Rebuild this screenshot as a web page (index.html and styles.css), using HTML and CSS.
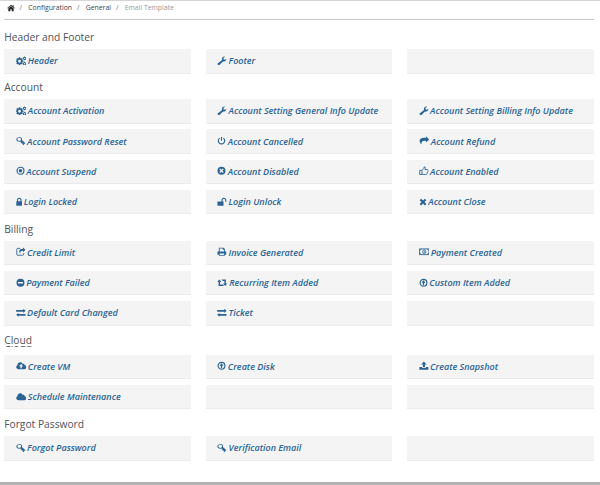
FILE: index.html
```
<!DOCTYPE html>
<html lang="en">
<head>
<meta charset="utf-8">
<title>Email Template</title>
<link rel="stylesheet" href="styles.css">
</head>
<body>
<svg class="sprite" aria-hidden="true">
  <symbol id="home" viewBox="0 0 14 14"><path d="M7 1.2 .4 6.9l.8.9L7 3l5.800 4.800.8-.9L11.500 5V2H9.700v1.500zM2.300 8v4.800h3.500V9h2.400v3.800h3.500V8L7 4.100z"/></symbol>
  <symbol id="cogs" viewBox="0 0 15 14"><path fill-rule="evenodd" d="M4 2h2l.3 1.400.9.4 1.200-.8L9.800 4.400 9 5.600l.4.900 1.300.3v1.900l-1.300.3-.4.900.8 1.200-1.400 1.400-1.200-.8-.9.4L6 13.300H4l-.3-1.200-.9-.4-1.200.8-1.400-1.400.8-1.200-.4-.9L0 8.700V6.800l.6-.3.400-.9-.8-1.200L1.600 3l1.200.8.9-.4zM5 5.600a2.100 2.100 0 1 0 0 4.200 2.100 2.100 0 0 0 0-4.200z"/><path fill-rule="evenodd" d="M12 .6h1l.3.8 1.200.3.4 1-.5.700.5.900-.4 1-1.200.3-.3.700h-1l-.5-.7-1.100-.3-.4-1 .5-.9-.5-.7.4-1 1.100-.3zM12.500 2.400a1 1 0 1 0 0 2 1 1 0 0 0 0-2zM12 8.600h1l.3.800 1.200.3.4 1-.5.700.5.900-.4 1-1.200.3-.3.400h-1l-.5-.4-1.100-.3-.4-1 .5-.9-.5-.7.4-1 1.100-.3zM12.500 10.400a1 1 0 1 0 0 2 1 1 0 0 0 0-2z"/></symbol>
  <symbol id="wrench" viewBox="0 0 14 14"><path d="M7.700 5.700.8 10.900a1.400 1.400 0 0 0 0 1.600l.7.700a1.400 1.400 0 0 0 1.800 0l5.300-5c2 .5 4.400-.8 5.200-3.500l-.3-.3-2.300 1.300-1.800-1V2.600L11.600 1.200 11.200.9C8.500.3 6.400 3.100 7.200 5.500z"/></symbol>
  <symbol id="key" viewBox="0 0 14 14"><path fill-rule="evenodd" d="M5.200 1.300c2.700 0 4.200 2 3.300 4.600l5.300 4.700-1.200 1.100-.8-.7-.7.700.8.800-1.100 1.100-2-2 .7-.8-1-.9-1.100 1.100-.9-.9 1.200-1.200-.8-.7C3.600 9.200.3 8 .3 5.200.3 3 2.600 1.300 5.200 1.300zM4.800 2.700C3.200 2.700 1.800 3.700 1.800 5.100s1.200 2.100 2.600 2.100S7.200 6.200 7.200 4.800 6.200 2.700 4.800 2.700z"/></symbol>
  <symbol id="power" viewBox="0 0 14 14"><path class="line" d="M4 2.900a5 5 0 1 0 6 0M7 1v6"/></symbol>
  <symbol id="share" viewBox="0 0 15 14"><path d="M14.900 5 10 9.500V7.200C5 6.900 2.800 8.300 3.500 12.500 1.500 10.500 0 7.500.9 5.600 2 3 6 2.700 10 2.700V.5z"/></symbol>
  <symbol id="stop" viewBox="0 0 14 14"><circle class="line" cx="7" cy="7" r="5.400"/><circle cx="7" cy="7" r="2.800"/></symbol>
  <symbol id="cross-circle" viewBox="0 0 14 14"><path fill-rule="evenodd" d="M7 .8a6.200 6.200 0 1 0 0 12.400A6.200 6.200 0 0 0 7 .8zM4.900 3.600 7 5.600l2.100-2 1.300 1.300-2 2.100 2 2.100-1.300 1.300-2.100-2-2.100 2-1.300-1.300 2-2.100-2-2.100z"/></symbol>
  <symbol id="thumb" viewBox="0 0 14 14"><path class="thin" d="M.8 6.500h3.400v6H.8zM4.200 6.500 6.800 3.800 7.500 1.200c1.800 0 2.200 1.500 1 4h3.300c1.500 0 1.500 1.600.7 2.100.6.600.4 1.700-.3 2 .2.900-.1 1.500-.7 1.700 0 1.100-.6 1.600-2 1.600H7.200l-3-.8"/></symbol>
  <symbol id="lock" viewBox="0 0 10 14"><path fill-rule="evenodd" d="M.5 6.200h1V4.500C1.500 2.500 3 1 5 1s3.500 1.500 3.500 3.500v1.700h1v6.800h-9zM3.200 6.200h3.600V4.500C6.800 3.500 6 2.700 5 2.700s-1.800.8-1.800 1.800z"/></symbol>
  <symbol id="unlock" viewBox="0 0 14 14"><path d="M.4 6.500h6V4.600C6.400 2.600 8 1 10 1s3.600 1.600 3.600 3.600v2.500h-1.700V4.600C11.900 3.400 11.200 2.800 10 2.800s-1.900.7-1.900 1.800v1.900h1.300V13h-9z"/></symbol>
  <symbol id="close" viewBox="0 0 11 14"><path d="M2.700 2.500 5.500 5.300l2.800-2.800 2.200 2.200-2.800 2.800 2.800 2.800-2.200 2.200-2.800-2.800-2.800 2.800-2.200-2.200 2.800-2.800L.5 4.700z"/></symbol>
  <symbol id="share-square" viewBox="0 0 14 14"><path class="thin" d="M6 2H2.500Q.9 2 .9 3.600v7q0 1.600 1.600 1.600h7q1.600 0 1.600-1.600V9"/><path d="M13.800 4.200 10 7.800V5.700C6.500 5.600 5.500 7 6.200 9.800 4 8 3.600 3.100 8 2.800h2V.6z"/></symbol>
  <symbol id="print" viewBox="0 0 14 14"><path fill-rule="evenodd" d="M2.500 1h7l2 2v3.200c1.300 0 2 .7 2 1.800v3.500h-2V13h-9v-1.500h-2V8c0-1.100.7-1.800 2-1.800zM3.700 2.200v4.600h6.600V4.200h-2v-2zM3.700 9.500v2.300h6.600V9.500z"/></symbol>
  <symbol id="money" viewBox="0 0 16 14"><path class="thin" d="M.8 2.600h14.400v8.800H.8zM1 4.600q2 0 2-2M15 4.600q-2 0-2-2M1 9.400q2 0 2 2M15 9.400q-2 0-2 2"/><ellipse class="thin" cx="8" cy="7" rx="2.500" ry="3"/><path d="M7.500 5h1v4h-1z"/></symbol>
  <symbol id="minus-circle" viewBox="0 0 14 14"><path fill-rule="evenodd" d="M7 .8a6.200 6.200 0 1 0 0 12.400A6.200 6.200 0 0 0 7 .8zM3.200 6h7.600v2H3.200z"/></symbol>
  <symbol id="retweet" viewBox="0 0 15 14"><path d="M3.200 2.200 6.300 6H4.300v3.600h4l1.800 2.300H2.100V6H0zM6.400 2.200h6.500V8H15l-3.200 3.800L8.600 8h2.100V4.500H8.200z"/></symbol>
  <symbol id="up-circle" viewBox="0 0 14 14"><circle class="line" cx="7" cy="7" r="5.300"/><path d="M7 3.200 10.200 7H8v3.400H6V7H3.800z"/></symbol>
  <symbol id="exchange" viewBox="0 0 14 14"><path d="M0 3h10.500V1.200L14 4.200l-3.500 3V5.400H0zM14 9H3.500V7.200L0 9.900l3.500 3v-1.600H14z"/></symbol>
  <symbol id="cloud" viewBox="0 0 15 14"><path d="M3.500 12C1.500 12 .1 10.700.1 8.900c0-1.300.7-2.300 1.900-2.800C1.900 3.700 3.700 2 6 2c1.600 0 2.900.9 3.600 2.200 1.500-.8 3.100.3 2.900 2 1.500.3 2.400 1.400 2.400 2.900 0 1.700-1.300 2.900-3 2.900z"/></symbol>
  <symbol id="cloud-up" viewBox="0 0 15 14"><path fill-rule="evenodd" d="M3.500 12C1.500 12 .1 10.700.1 8.900c0-1.300.7-2.300 1.900-2.800C1.900 3.700 3.700 2 6 2c1.600 0 2.900.9 3.600 2.200 1.500-.8 3.100.3 2.900 2 1.500.3 2.400 1.400 2.400 2.900 0 1.700-1.300 2.900-3 2.900zM7.300 4.500 4.300 7.600h2v3h2v-3h2z"/></symbol>
  <symbol id="upload" viewBox="0 0 14 14"><path d="M7 .7 11 5H8.500v4.200h-3V5H3zM.3 8.700h4v1.700h5.400V8.700h4V13H.3z"/></symbol>
</svg>

<nav class="breadcrumb">
  <svg class="home"><use href="#home"/></svg>
  <span class="sep">/</span><span>Configuration</span>
  <span class="sep">/</span><span>General</span>
  <span class="sep">/</span><span class="current">Email Template</span>
</nav>

<main>
  <section>
    <h2 class="title-header"><span>Header and Footer</span></h2>
    <div class="grid">
      <a class="cell"><svg class="w12"><use href="#cogs"/></svg>Header</a>
      <a class="cell"><svg class="w11"><use href="#wrench"/></svg>Footer</a>
      <div class="cell"></div>
    </div>
  </section>
  <section>
    <h2 class="title-account"><span>Account</span></h2>
    <div class="grid">
      <a class="cell"><svg class="w12"><use href="#cogs"/></svg>Account Activation</a>
      <a class="cell"><svg class="w11"><use href="#wrench"/></svg>Account Setting General Info Update</a>
      <a class="cell"><svg class="w11"><use href="#wrench"/></svg>Account Setting Billing Info Update</a>
      <a class="cell"><svg class="w11"><use href="#key"/></svg>Account Password Reset</a>
      <a class="cell"><svg class="w10"><use href="#power"/></svg>Account Cancelled</a>
      <a class="cell"><svg class="w12"><use href="#share"/></svg>Account Refund</a>
      <a class="cell"><svg class="w10"><use href="#stop"/></svg>Account Suspend</a>
      <a class="cell"><svg class="w10"><use href="#cross-circle"/></svg>Account Disabled</a>
      <a class="cell"><svg class="w11"><use href="#thumb"/></svg>Account Enabled</a>
      <a class="cell"><svg class="w8"><use href="#lock"/></svg>Login Locked</a>
      <a class="cell"><svg class="w11"><use href="#unlock"/></svg>Login Unlock</a>
      <a class="cell"><svg class="w9"><use href="#close"/></svg>Account Close</a>
    </div>
  </section>
  <section>
    <h2 class="title-billing"><span>Billing</span></h2>
    <div class="grid">
      <a class="cell"><svg class="w11"><use href="#share-square"/></svg>Credit Limit</a>
      <a class="cell"><svg class="w11"><use href="#print"/></svg>Invoice Generated</a>
      <a class="cell"><svg class="w12"><use href="#money"/></svg>Payment Created</a>
      <a class="cell"><svg class="w10"><use href="#minus-circle"/></svg>Payment Failed</a>
      <a class="cell"><svg class="w12"><use href="#retweet"/></svg>Recurring Item Added</a>
      <a class="cell"><svg class="w10"><use href="#up-circle"/></svg>Custom Item Added</a>
      <a class="cell"><svg class="w11"><use href="#exchange"/></svg>Default Card Changed</a>
      <a class="cell"><svg class="w11"><use href="#exchange"/></svg>Ticket</a>
      <div class="cell"></div>
    </div>
  </section>
  <section>
    <h2 class="title-cloud"><span class="echo">Cloud</span></h2>
    <div class="grid">
      <a class="cell"><svg class="w12"><use href="#cloud-up"/></svg>Create VM</a>
      <a class="cell"><svg class="w10"><use href="#up-circle"/></svg>Create Disk</a>
      <a class="cell"><svg class="w11"><use href="#upload"/></svg>Create Snapshot</a>
      <a class="cell"><svg class="w12"><use href="#cloud"/></svg>Schedule Maintenance</a>
      <div class="cell"></div>
      <div class="cell"></div>
    </div>
  </section>
  <section>
    <h2 class="title-forgot"><span>Forgot Password</span></h2>
    <div class="grid">
      <a class="cell"><svg class="w11"><use href="#key"/></svg>Forgot Password</a>
      <a class="cell"><svg class="w11"><use href="#key"/></svg>Verification Email</a>
      <div class="cell"></div>
    </div>
  </section>
</main>
<footer></footer>
</body>
</html>
```
FILE: styles.css
```
* { box-sizing: border-box; }
body {
  margin: 0;
  height: 485px;
  display: flex;
  flex-direction: column;
  overflow: hidden;
  background: #fff;
  border-top: 1px solid #d5d5d5;
  font-family: "Open Sans", "Noto Sans", sans-serif;
}
.sprite { position: absolute; width: 0; height: 0; }
svg { fill: currentColor; }
.line { fill: none; stroke: currentColor; stroke-width: 1.8; }
.thin { fill: none; stroke: currentColor; stroke-width: 1.3; }
.breadcrumb {
  flex: none;
  display: flex;
  align-items: center;
  height: 19px;
  margin: 0 6px 0 4px;
  padding: 0 0 5px 2.500px;
  border-bottom: 1px solid #c6c6c6;
  font-size: 6.850px;
  color: #444;
}
.home { width: 8px; height: 8px; color: #222; }
.sep { width: 13.800px; padding-left: 5px; color: #777; }
.current { color: #999; }
main { flex: 1; padding: 0 6.500px 0 4.2px; }
h2 {
  display: flex;
  align-items: center;
  margin: 0;
  font-size: 10.250px;
  font-weight: 400;
  line-height: 14px;
  color: #505459;
}
.title-header { height: 29.2px; padding-top: 5px; }
.title-account { height: 25.6px; padding-top: 2px; }
.title-billing { height: 26.4px; padding-top: 3px; }
.title-cloud { height: 29px; }
.title-forgot { height: 27px; padding-top: 2px; }
.echo { position: relative; }
.echo::after {
  content: "Cloud";
  position: absolute;
  left: 0;
  top: 3px;
  clip-path: inset(10px 0 0 0);
}
.grid {
  display: grid;
  grid-template-columns: repeat(3, 1fr);
  gap: 5.7px 15.2px;
}
.cell {
  display: flex;
  align-items: center;
  height: 24.5px;
  padding: 0 0 .4px 11.600px;
  background: #f4f4f4;
  border-bottom: 1px solid #ebebeb;
  color: #2a6496;
  font-size: 9.020px;
  font-style: italic;
  font-weight: 600;
  white-space: nowrap;
}
.cell svg { flex: none; height: 9.5px; margin: 0 1.500px .2px 0; }
.w12 { width: 10.500px; }
.w11 { width: 9.800px; }
.w10 { width: 9px; }
.w9 { width: 8px; }
.w8 { width: 6.500px; }
footer { flex: none; height: 3px; background: #b3b3b3; }
```
